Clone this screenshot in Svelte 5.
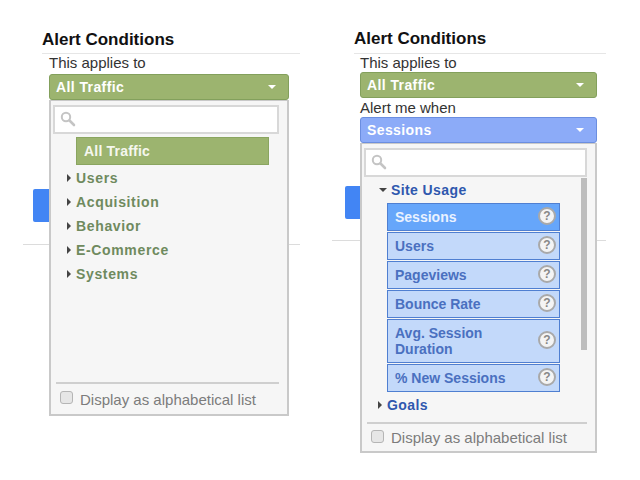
<script>
  const groups = ["Users", "Acquisition", "Behavior", "E-Commerce", "Systems"];
  const metrics = [
    { name: "Sessions", active: true },
    { name: "Users" },
    { name: "Pageviews" },
    { name: "Bounce Rate" },
    { name: "Avg. Session Duration", tall: true },
    { name: "% New Sessions" }
  ];
</script>

{#snippet searchBox()}
  <div class="search">
    <svg width="16" height="16" viewBox="0 0 16 16" fill="none" stroke="#c4c4c4">
      <circle cx="6" cy="6" r="4.2" stroke-width="2" />
      <path d="M9.5 9.5l4.5 4.5" stroke-width="2.6" stroke-linecap="round" />
    </svg>
  </div>
{/snippet}

{#snippet footer()}
  <div class="foot">
    <span class="check"></span>
    <span>Display as alphabetical list</span>
  </div>
{/snippet}

{#snippet select(label, tone)}
  <div class="select {tone}">
    <span>{label}</span>
    <i class="caret"></i>
  </div>
{/snippet}

<div class="page">
  <section class="panel left">
    <h3>Alert Conditions</h3>
    <div class="fields">
      <p class="label">This applies to</p>
      {@render select("All Traffic", "green")}
      <div class="anchor">
        <div class="menu">
          {@render searchBox()}
          <div class="picked">All Traffic</div>
          <ul class="groups">
            {#each groups as g}
              <li><i class="arrow"></i>{g}</li>
            {/each}
          </ul>
          {@render footer()}
        </div>
      </div>
    </div>
    <div class="under">
      <div class="save"></div>
      <div class="rule"></div>
    </div>
  </section>

  <section class="panel right">
    <h3>Alert Conditions</h3>
    <div class="fields">
      <p class="label">This applies to</p>
      {@render select("All Traffic", "green")}
      <p class="label second">Alert me when</p>
      {@render select("Sessions", "blue")}
      <div class="anchor">
        <div class="menu">
          {@render searchBox()}
          <div class="scroll">
            <div class="list">
              <div class="head"><i class="arrow down"></i>Site Usage</div>
              {#each metrics as m}
                <div class="metric" class:active={m.active} class:tall={m.tall}>
                  <span>{m.name}</span>
                  <b class="help">?</b>
                </div>
              {/each}
              <div class="head goals"><i class="arrow"></i>Goals</div>
            </div>
            <div class="thumb"></div>
          </div>
          {@render footer()}
        </div>
      </div>
    </div>
    <div class="under">
      <div class="save"></div>
      <div class="rule"></div>
    </div>
  </section>
</div>

<style>
  :global(body) {
    background: #fff;
    font-family: "Liberation Sans", Arial, sans-serif;
    overflow: hidden;
  }

  .page {
    display: flex;
    height: 480px;
    padding-left: 42px;
    gap: 54px;
  }

  .panel {
    width: 258px;
    padding-top: 30px;
  }

  .right {
    width: 252px;
  }

  h3 {
    margin: 0;
    font-size: 17px;
    line-height: 18px;
    font-weight: 700;
    color: #111;
    padding-top: 1px;
    padding-bottom: 4px;
    border-bottom: 1px solid #e6e6e6;
  }

  .right h3 {
    padding-top: 0;
    padding-bottom: 5px;
  }

  .fields {
    padding-left: 7px;
    width: 240px;
  }

  .right .fields {
    width: 237px;
    padding-left: 6px;
  }

  .label {
    margin: 0;
    font-size: 15px;
    line-height: 18px;
    padding-bottom: 2px;
    color: #333;
  }

  .right .label {
    line-height: 17px;
    padding-bottom: 1px;
  }

  .right .label.second {
    line-height: 19px;
    padding-bottom: 0;
  }

  .select {
    height: 26px;
    box-sizing: border-box;
    border-radius: 3px;
    display: flex;
    align-items: center;
    justify-content: space-between;
    padding: 0 12px 0 6px;
    color: #fff;
    font-size: 14px;
    font-weight: 700;
    letter-spacing: 0.4px;
  }

  .green {
    background: #9cb46f;
    border: 1px solid #83a05c;
  }

  .blue {
    background: #8cabf8;
    border: 1px solid #6b8ee0;
  }

  .caret {
    width: 0;
    height: 0;
    border: 4px solid transparent;
    border-top-color: #fff;
    border-bottom: 0;
  }

  .anchor {
    position: relative;
  }

  .menu {
    position: absolute;
    top: 0;
    left: 0;
    width: 100%;
    box-sizing: border-box;
    height: 316px;
    background: #f6f6f6;
    border: 2px solid #c9c9c9;
    border-top-width: 1px;
    display: flex;
    flex-direction: column;
    padding: 4px 8px 0 2px;
    z-index: 1;
  }

  .right .menu {
    height: 310px;
  }

  .search {
    height: 29px;
    flex: none;
    box-sizing: border-box;
    background: #fff;
    border: 2px solid #d8d8d8;
    padding: 4px 0 0 5px;
    display: flex;
  }

  .picked {
    margin: 3px 0 0 23px;
    width: 193px;
    height: 28px;
    box-sizing: border-box;
    background: #9cb46f;
    border: 1px solid #8aa560;
    color: #f5f7ee;
    font-size: 14px;
    font-weight: 700;
    line-height: 26px;
    padding-left: 7px;
    letter-spacing: 0.2px;
  }

  .groups {
    list-style: none;
    margin: 1px 0 0;
    padding: 0 0 0 23px;
    flex: 1;
    color: #6f8a5e;
    font-size: 14px;
    font-weight: 700;
    line-height: 24px;
    letter-spacing: 0.65px;
  }

  .groups li {
    position: relative;
  }

  .arrow {
    position: absolute;
    left: -9px;
    top: 8px;
    width: 0;
    height: 0;
    border: 4px solid transparent;
    border-left-color: #444;
    border-right: 0;
  }

  .arrow.down {
    left: -12px;
    top: 11px;
    border: 4px solid transparent;
    border-top-color: #444;
    border-bottom: 0;
  }

  .foot {
    flex: none;
    height: 32px;
    margin: 0 0 0 3px;
    border-top: 2px solid #cfcfcf;
    display: flex;
    align-items: center;
    gap: 7px;
    font-size: 15px;
    color: #7c7c7c;
    padding-left: 4px;
    box-sizing: border-box;
  }

  .right .foot {
    height: 29px;
  }

  .check {
    width: 11px;
    height: 11px;
    border: 1px solid #b5b5b5;
    border-radius: 3px;
    background: #e6e6e6;
    margin-top: -3px;
  }

  .scroll {
    flex: 1;
    min-height: 0;
    margin-bottom: 9px;
    overflow: hidden;
    display: flex;
    justify-content: space-between;
    align-items: flex-start;
  }

  .list {
    padding-left: 23px;
    width: 173px;
    flex: none;
  }

  .head {
    position: relative;
    font-size: 14px;
    font-weight: 700;
    line-height: 26px;
    color: #2f58ae;
    letter-spacing: 0.4px;
    margin-left: 4px;
  }

  .goals {
    margin-left: 0;
    line-height: 24px;
  }

  .goals .arrow {
    left: -9px;
  }

  .metric {
    box-sizing: border-box;
    height: 28px;
    margin-bottom: 1px;
    background: #c3d9fa;
    border: 1px solid #4f7fd1;
    color: #4a70c0;
    font-size: 14px;
    font-weight: 700;
    line-height: 16px;
    display: flex;
    align-items: center;
    justify-content: space-between;
    padding: 0 3px 0 7px;
  }

  .metric.active {
    background: #66a6fa;
    color: #eaf2ff;
  }

  .metric.tall {
    height: 44px;
  }

  .metric span {
    width: 120px;
  }

  .help {
    width: 14px;
    height: 14px;
    border: 2px solid #a9a9a9;
    border-radius: 50%;
    background: #f4f4f4;
    color: #888;
    font-size: 12px;
    line-height: 14px;
    text-align: center;
    margin: -3px 0 0 0;
    flex: none;
  }

  .thumb {
    width: 11px;
    height: 172px;
    background: #bdbdbd;
    margin: 1px -5px 0 0;
  }

  .under {
    padding-top: 89px;
  }

  .right .under {
    padding-top: 43px;
  }

  .save {
    width: 24px;
    height: 33px;
    margin-left: -9px;
    background: #4285f4;
    border-radius: 2px;
  }

  .rule {
    height: 1px;
    margin: 22px 0 0 -19px;
    background: #dcdcdc;
  }

  .right .rule {
    margin-top: 21px;
    margin-left: -22px;
  }
</style>
